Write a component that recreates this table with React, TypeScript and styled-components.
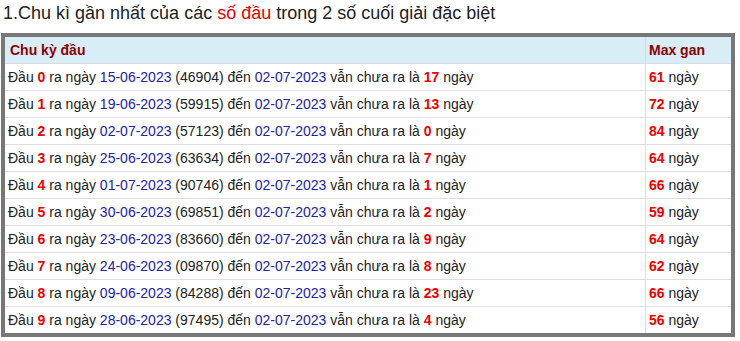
import React from 'react';
import styled, { createGlobalStyle } from 'styled-components';

const GlobalStyle = createGlobalStyle`
    body {
        margin: 0;
        background: #fff;
        font-family: "Liberation Sans", Arial, sans-serif;
    }
`;

const Page = styled.div`
    padding: 0 5px 0 1px;
`;

const Title = styled.div`
    font-size: 18px;
    line-height: 24px;
    color: #222;
    padding: 1px 0 0 2px;
    margin-bottom: 8px;
`;

const Red = styled.span`
    color: #e00;
`;

const Table = styled.table`
    width: 100%;
    border-collapse: collapse;
    border: 4px solid #777;
    font-size: 14px;
    color: #222;
`;

const HeadCell = styled.th<{ $narrow?: boolean }>`
    background: #d9edf7;
    color: #8b0000;
    font-weight: bold;
    text-align: left;
    height: 26px;
    padding: 0 4px 0 ${(p) => (p.$narrow ? '3px' : '5px')};
    border: 1px solid #ddd;
    width: ${(p) => (p.$narrow ? '78px' : 'auto')};
`;

const Cell = styled.td`
    height: 26px;
    padding: 0 4px 0 3px;
    border: 1px solid #ddd;
    white-space: nowrap;
`;

const Num = styled.b`
    color: #e00;
`;

const DateText = styled.span`
    color: #2222a6;
`;

interface GanRow {
    head: number;
    date: string;
    code: string;
    days: number;
    max: number;
}

const rows: GanRow[] = [
    { head: 0, date: '15-06-2023', code: '46904', days: 17, max: 61 },
    { head: 1, date: '19-06-2023', code: '59915', days: 13, max: 72 },
    { head: 2, date: '02-07-2023', code: '57123', days: 0, max: 84 },
    { head: 3, date: '25-06-2023', code: '63634', days: 7, max: 64 },
    { head: 4, date: '01-07-2023', code: '90746', days: 1, max: 66 },
    { head: 5, date: '30-06-2023', code: '69851', days: 2, max: 59 },
    { head: 6, date: '23-06-2023', code: '83660', days: 9, max: 64 },
    { head: 7, date: '24-06-2023', code: '09870', days: 8, max: 62 },
    { head: 8, date: '09-06-2023', code: '84288', days: 23, max: 66 },
    { head: 9, date: '28-06-2023', code: '97495', days: 4, max: 56 },
];

const lastDate = '02-07-2023';

export default function App() {
    return (
        <>
            <GlobalStyle />
            <Page>
                <Title>
                    1.Chu kì gần nhất của các <Red>số đầu</Red> trong 2 số cuối giải đặc biệt
                </Title>
                <Table>
                    <thead>
                        <tr>
                            <HeadCell>Chu kỳ đầu</HeadCell>
                            <HeadCell $narrow>Max gan</HeadCell>
                        </tr>
                    </thead>
                    <tbody>
                        {rows.map((r) => (
                            <tr key={r.head}>
                                <Cell>
                                    Đầu <Num>{r.head}</Num> ra ngày <DateText>{r.date}</DateText> ({r.code}) đến{' '}
                                    <DateText>{lastDate}</DateText> vẫn chưa ra là <Num>{r.days}</Num> ngày
                                </Cell>
                                <Cell>
                                    <Num>{r.max}</Num> ngày
                                </Cell>
                            </tr>
                        ))}
                    </tbody>
                </Table>
            </Page>
        </>
    );
}
